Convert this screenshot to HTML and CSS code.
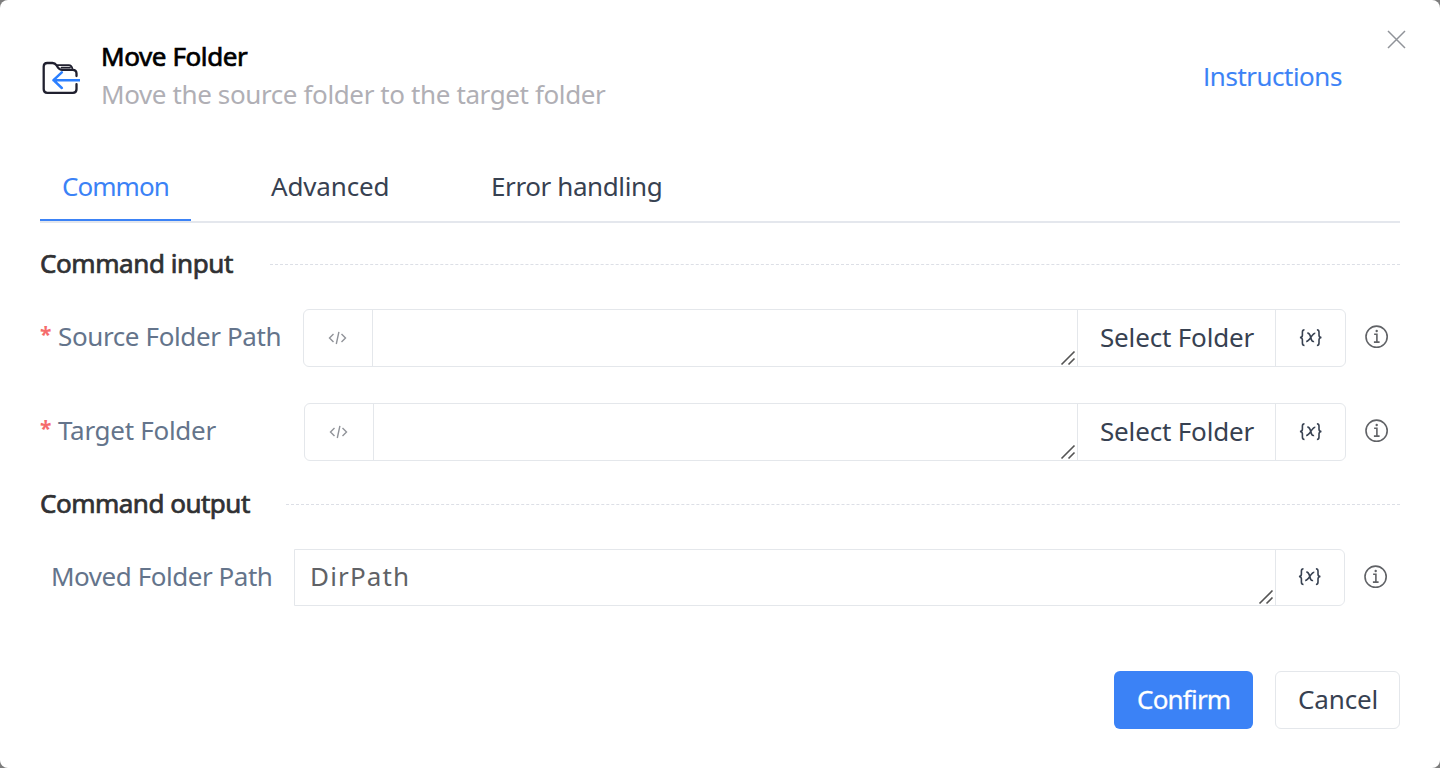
FILE: index.html
```html
<!DOCTYPE html>
<html lang="en">
<head>
<meta charset="utf-8">
<title>Move Folder</title>
<link rel="stylesheet" href="styles.css">
</head>
<body>
<svg class="sprite" width="0" height="0">
  <symbol id="code" viewBox="0 0 20 16"><path d="M5.500 4 1.500 8l4 4M13.500 4l4 4-4 4M10.900 1.800 8.300 14"/></symbol>
  <symbol id="var" viewBox="0 0 24 20"><path d="M5.500 1.700C3.600 1.700 3.400 2.700 3.400 4v3.200C3.400 8.800 2.600 9.300 1 9.500 2.600 9.700 3.400 10.200 3.400 11.800v3.200c0 1.400.2 2.500 2.100 2.500M17.900 1.700c1.900 0 2.100 1 2.100 2.300v3.200c0 1.600.8 2.100 2.400 2.300-1.600.2-2.400.7-2.400 2.300v3.200c0 1.400-.2 2.500-2.100 2.500"/><path d="M8.300 5.200c2-.3 2.600.9 3.400 4.100s1.400 4.700 3.400 4.100M16.300 5.200c-1.500-.1-2.700 1.500-4.400 4.100s-2.900 4.400-4.700 4.100"/></symbol>
  <symbol id="info" viewBox="0 0 24 24"><circle cx="11.600" cy="11.700" r="10.600"/><path d="M9.100 9.200h2.800v8M8.900 17.100h5.700"/><circle class="dot" cx="11.700" cy="6" r="1.200"/></symbol>
  <symbol id="grip" viewBox="0 0 16 16"><path d="M1.500 14.500 14.500 1.500M8.500 14.500l6-6"/></symbol>
</svg>
<main class="dialog">
  <button class="close" aria-label="Close"><svg width="20" height="20" viewBox="0 0 20 20"><path d="M1 2l17 17M18 2l-17 17"/></svg></button>
  <header class="header">
    <svg class="folder" width="40" height="36" viewBox="0 0 40 36">
      <path d="M36.500 15v-2.500c0-2.300-1.400-3.700-3.800-3.700H22.300c-2.300 0-3.600-1-4.700-2.800l-1-1.600C15.500 2.800 14.300 2 12.500 2H7.300C5 2 3.700 3.300 3.700 5.600v22.700c0 2.300 1.300 3.600 3.600 3.600h25.600c2.300 0 3.600-1.300 3.600-3.600v-5.100"/>
      <path class="tab-fold" d="M17.500 4.200h11.300c2.400 0 3.400 2.100 3.800 4.300M21.500 6.600h8.500"/>
      <path class="arrow" d="M39.500 19.200H13.500M21.800 11.300 13.500 19.200l8.300 7.800"/>
    </svg>
    <div class="heading">
      <h1 class="title"><span class="t-title">Move Folder</span></h1>
      <p class="subtitle"><span class="t-sub">Move the source folder to the target folder</span></p>
    </div>
    <a class="instructions"><span class="t-ins">Instructions</span></a>
  </header>
  <nav class="tabs">
    <a class="tab active"><span class="t-com">Common</span></a>
    <a class="tab second"><span class="t-adv">Advanced</span></a>
    <a class="tab third"><span class="t-err">Error handling</span></a>
  </nav>
  <section>
    <h2 class="section-title input-title"><span class="t-cin">Command input</span></h2>
    <div class="row">
      <label class="label"><i class="star">*</i><span class="t-src">Source Folder Path</span></label>
      <div class="group">
        <span class="cell code"><svg width="20" height="16"><use href="#code"/></svg></span>
        <div class="field"><svg class="grip" width="16" height="16"><use href="#grip"/></svg></div>
        <button class="cell select"><span class="t-sel">Select Folder</span></button>
        <button class="cell var"><svg width="24" height="20"><use href="#var"/></svg></button>
      </div>
      <svg class="info" width="24" height="24"><use href="#info"/></svg>
    </div>
    <div class="row target">
      <label class="label"><i class="star">*</i><span class="t-tgt">Target Folder</span></label>
      <div class="group">
        <span class="cell code"><svg width="20" height="16"><use href="#code"/></svg></span>
        <div class="field"><svg class="grip" width="16" height="16"><use href="#grip"/></svg></div>
        <button class="cell select"><span class="t-sel">Select Folder</span></button>
        <button class="cell var"><svg width="24" height="20"><use href="#var"/></svg></button>
      </div>
      <svg class="info" width="24" height="24"><use href="#info"/></svg>
    </div>
  </section>
  <section>
    <h2 class="section-title output-title"><span class="t-cout">Command output</span></h2>
    <div class="row moved">
      <label class="label"><span class="t-mov">Moved Folder Path</span></label>
      <div class="group">
        <div class="field"><span class="t-dir">DirPath</span><svg class="grip" width="16" height="16"><use href="#grip"/></svg></div>
        <button class="cell var"><svg width="24" height="20"><use href="#var"/></svg></button>
      </div>
      <svg class="info" width="24" height="24"><use href="#info"/></svg>
    </div>
  </section>
  <footer class="footer">
    <button class="btn confirm"><span class="t-ok">Confirm</span></button>
    <button class="btn cancel"><span class="t-can">Cancel</span></button>
  </footer>
</main>
</body>
</html>
```

FILE: styles.css
```css
* { box-sizing: border-box; }
body { margin: 0; background: #7d7d7d; font: 26px/38px "Noto Sans", "Open Sans", sans-serif; color: #374151; }
h1, h2, p { margin: 0; font-size: 26px; font-weight: 400; }
button { font: inherit; color: inherit; background: none; border: 0; padding: 0; }
svg { fill: none; stroke: currentColor; flex: none; display: block; }
span { white-space: nowrap; }
.sprite { position: absolute; }
.dialog { position: relative; width: 1440px; height: 768px; padding: 37px 40px 0; background: #fff; border-radius: 8px; overflow: hidden; }
.close { position: absolute; top: 29px; right: 33px; color: #909399; }
.close svg { stroke-width: 1.5; }
.header { display: flex; height: 76px; }
.folder { margin-top: 24px; color: #20202f; stroke-width: 2.3; stroke-linecap: round; stroke-linejoin: round; }
.tab-fold { stroke-width: 1.7; }
.arrow { stroke: #2b7fff; stroke-width: 2.5; }
.heading { flex: 1; padding-left: 21px; }
.title { color: #000; -webkit-text-stroke: .7px #000; }
.subtitle { color: #b0afb5; }
.instructions { width: 197px; padding-top: 20px; color: #3b82f6; font-family: "Open Sans", sans-serif; -webkit-text-stroke: .2px #3b82f6; }
.tabs { display: flex; height: 74px; margin-top: 36px; border-bottom: 2px solid #e4e7ed; }
.tab { padding-top: 18px; }
.tab.active { width: 151px; height: 72px; padding-left: 22px; color: #3b82f6; border-bottom: 2px solid #3b82f6; }
.second { margin-left: 80px; width: 220px; }
.section-title { display: flex; height: 38px; align-items: center; color: #303133; -webkit-text-stroke: .7px #303133; }
.section-title::after { content: ""; flex: 1; border-top: 1px dashed #dcdfe6; margin-top: 3px; }
.section-title span { flex: none; width: 230px; }
.input-title { margin-top: 21px; }
.output-title { margin-top: 23px; }
.section-title .t-cout { width: 246px; }
.row { display: flex; align-items: center; height: 58px; margin-top: 27px; }
.row.target { margin-top: 36px; }
.label { display: flex; width: 263px; color: #64748b; padding-bottom: 4px; }
.target .label { width: 264px; }
.moved .label { width: 254px; padding-left: 11px; }
.star { width: 18px; color: #f56c6c; font-style: normal; font-size: 21px; font-weight: 700; line-height: 35px; }
.group { display: flex; flex: 1; height: 58px; border: 1px solid #e4e7eb; border-radius: 6px; }
.cell { display: flex; align-items: center; justify-content: center; height: 100%; }
.code { width: 68px; color: #909399; }
.code svg { stroke-width: 1.4; margin-right: 1px; }
.field { flex: 1; position: relative; border: solid #e4e7eb; border-width: 0 1px; }
.grip { position: absolute; right: 1px; bottom: 0; color: #555; stroke-width: 1.6; }
.select { width: 198px; justify-content: flex-start; padding: 0 0 2px 22px; border-right: 1px solid #e4e7eb; }
.var { width: 69px; padding-bottom: 1px; }
.var svg { stroke-width: 1.6; }
.info { margin: 0 11px 3px 19px; color: #606266; stroke-width: 1.6; }
.dot { fill: currentColor; stroke: none; }
.row.moved { height: 57px; margin-top: 27px; }
.moved .group { height: 57px; border-radius: 0 6px 6px 0; }
.moved .field { border-left: 0; padding: 7px 0 0 15px; color: #606266; }
.moved .var { width: 68px; }
.moved .info { margin: 0 12px 2px 19px; }
.footer { display: flex; justify-content: flex-end; gap: 22px; margin-top: 65px; }
.btn { height: 58px; border-radius: 6px; text-align: left; padding: 0 0 2px 22px; }
.confirm { width: 139px; padding-left: 23px; background: #3b82f6; color: #fff; -webkit-text-stroke: .3px #fff; }
.cancel { width: 125px; border: 1px solid #e4e7eb; }
.t-title { letter-spacing: -.4px; }
.t-sub { letter-spacing: -.385px; }
.t-ins { letter-spacing: -.4px; }
.t-com { letter-spacing: -.95px; }
.t-adv { letter-spacing: -.15px; }
.t-err { letter-spacing: -.4px; }
.t-cin { letter-spacing: -.42px; }
.t-src { letter-spacing: -.38px; }
.t-sel { letter-spacing: -.17px; }
.t-tgt { letter-spacing: -.28px; }
.t-cout { letter-spacing: -.5px; }
.t-mov { letter-spacing: -.46px; }
.t-dir { letter-spacing: 1.15px; }
.t-ok { letter-spacing: -.8px; }
.t-can { letter-spacing: -.15px; }
```
